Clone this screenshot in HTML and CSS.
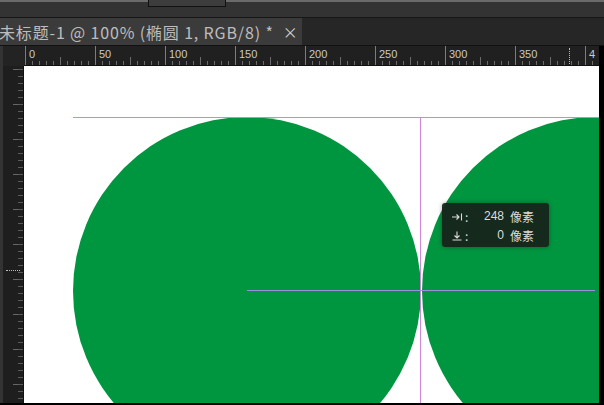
FILE: index.html
```html
<!DOCTYPE html>
<html lang="zh-CN">
<head>
    <meta charset="UTF-8">
    <title>未标题-1 @ 100%</title>
    <link rel="stylesheet" href="styles.css">
</head>
<body>

    <div class="app">
        <!-- options bar (cut off at the top) -->
        <div class="options-bar">
            <div class="opt-box"></div>
        </div>

        <!-- document tabs -->
        <div class="tab-row">
            <div class="tab">
                <span class="tab-title">未标题-1 @ 100% (椭圆 1, RGB/8) *</span>
                <span class="tab-close">×</span>
            </div>
        </div>

        <div class="workspace">
            <div class="ruler-corner"></div>
            <div class="ruler-h">
                <span>0</span><span>50</span><span>100</span><span>150</span><span>200</span>
                <span>250</span><span>300</span><span>350</span><span>4</span>
                <i class="cursor-mark-h"></i>
            </div>
            <div class="edge-top"></div>

            <div class="ruler-v">
                <i class="cursor-mark-v"></i>
            </div>
            <div class="canvas">
                <div class="circle circle-a"></div>
                <div class="circle circle-b"></div>

                <div class="guide guide-top"></div>
                <div class="guide guide-vert"></div>
                <div class="smart-guide"></div>

                <div class="measure">
                    <svg class="m-icon" width="12" height="10" viewBox="0 0 12 10">
                        <path d="M1 5h7M5.5 2.5 8 5 5.5 7.5M10.5 1.5v7" fill="none" stroke="#dcdcdc" stroke-width="1.1"/>
                    </svg>
                    <span class="m-colon">:</span><span class="m-num">248</span><span class="m-unit">像素</span>
                    <svg class="m-icon" width="12" height="10" viewBox="0 0 12 10">
                        <path d="M6 0.5v6.5M3.5 4.5 6 7 8.5 4.5M1.5 9h9" fill="none" stroke="#dcdcdc" stroke-width="1.1"/>
                    </svg>
                    <span class="m-colon">:</span><span class="m-num">0</span><span class="m-unit">像素</span>
                </div>
            </div>
            <div class="edge-right"></div>
        </div>
        <div class="edge-bottom"></div>
    </div>

</body>
</html>
```

FILE: styles.css
```css
body {
    margin: 0;
    background: #000;
    font-family: "Noto Sans CJK SC", "Noto Sans", Arial, sans-serif;
    overflow: hidden;
}

.app {
    width: 604px;
    height: 405px;
    display: flex;
    flex-direction: column;
}

/* top strip */
.options-bar {
    height: 15px;
    border-top: 2px solid #6a6a6a;
    border-bottom: 1px solid #161616;
    background: #333;
    position: relative;
}

.opt-box {
    position: absolute;
    left: 148px;
    top: -2px;
    width: 76px;
    height: 6px;
    border: 1px solid #111;
    border-top: none;
    background: #3d3d3d;
}

.tab-row {
    height: 27px;
    background: #262626;
    border-bottom: 1px solid #111;
    display: flex;
}

.tab {
    width: 302px;
    background: #3b3b3b;
    display: flex;
    align-items: center;
    color: #bdbdbd;
    font-size: 16px;
    white-space: nowrap;
    overflow: hidden;
}

.tab-title {
    margin-left: -1px;
    letter-spacing: 0.85px;
}

.tab-close {
    margin-left: 9px;
    font-size: 15px;
    color: #d0d0d0;
}

.workspace {
    flex: 1;
    display: grid;
    grid-template-columns: 24px 1fr 5px;
    grid-template-rows: 20px 1fr;
    min-height: 0;
}

.ruler-corner {
    background: #232323;
    border-left: 3px solid #333;
}

.ruler-h {
    position: relative;
    display: flex;
    padding-left: 1px;
    background-color: #202020;
    background-image:
        repeating-linear-gradient(to right, #7d7d7d 0 1px, transparent 1px 70px),
        repeating-linear-gradient(to right, #6a6a6a 0 1px, transparent 1px 35px),
        repeating-linear-gradient(to right, #6a6a6a 0 1px, transparent 1px 7px);
    background-size: 100% 100%, 100% 8px, 100% 4px;
    background-position: 1px 0, 1px 100%, 1px 100%;
    background-repeat: no-repeat;
    color: #c9c9c9;
    font-family: "Liberation Sans", Arial, sans-serif;
    font-size: 11px;
    line-height: 16px;
    border-bottom: 1px solid #111;
    overflow: hidden;
}

.ruler-h span {
    flex: 0 0 70px;
    padding-left: 4px;
    box-sizing: border-box;
}

.cursor-mark-h {
    position: absolute;
    left: 545px;
    top: 2px;
    height: 18px;
    border-left: 1px dotted #bbb;
}

.edge-top {
    background: #000;
}

.ruler-v {
    position: relative;
    border-left: 3px solid #333;
    background-color: #1e1e1e;
    background-image:
        repeating-linear-gradient(to bottom, #5a5a5a 0 1px, transparent 1px 7px),
        repeating-linear-gradient(to bottom, #666 0 1px, transparent 1px 35px);
    background-size: 5px 100%, 10px 100%;
    background-position: 100% 3px, 100% 3px;
    background-repeat: no-repeat;
    border-right: 1px solid #111;
}

.cursor-mark-v {
    position: absolute;
    left: 3px;
    top: 204px;
    width: 14px;
    border-top: 1px dotted #bbb;
}

.edge-right {
    background: #000;
}

.edge-bottom {
    height: 2px;
    background: #000;
}

/* document canvas */
.canvas {
    position: relative;
    background: #fff;
    overflow: hidden;
}

.circle {
    position: absolute;
    top: 51px;
    width: 348px;
    height: 348px;
    border-radius: 50%;
    background: #00953f;
}

.circle-a {
    left: 49px;
}

.circle-b {
    left: 398px;
}

.guide {
    position: absolute;
    background: #cf86d9;
}

.guide-top {
    left: 49px;
    right: 0;
    top: 51px;
    height: 1px;
}

.guide-vert {
    left: 396px;
    top: 51px;
    bottom: 0;
    width: 1px;
}

.smart-guide {
    position: absolute;
    left: 223px;
    width: 348px;
    top: 224px;
    height: 1px;
    background: #9a8fdc;
}

/* distance readout */
.measure {
    position: absolute;
    left: 418px;
    top: 137px;
    width: 107px;
    height: 44px;
    box-sizing: border-box;
    padding: 4px 0 0 9px;
    background: rgba(22, 34, 28, 0.94);
    border-radius: 3px;
    box-shadow: 0 0 4px rgba(0, 0, 0, 0.35);
    color: #dcdcdc;
    font-size: 12px;
    line-height: 19px;
    display: grid;
    grid-template-columns: 14px 10px 29px auto;
    align-content: start;
    align-items: center;
}

.m-num {
    text-align: right;
    font-family: "Liberation Sans", Arial, sans-serif;
}

.m-unit {
    padding-left: 6px;
}
```
